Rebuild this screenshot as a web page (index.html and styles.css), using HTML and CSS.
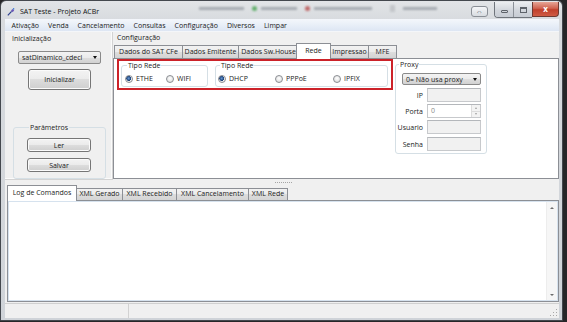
FILE: index.html
```html
<!DOCTYPE html>
<html lang="pt">
<head>
<meta charset="utf-8">
<title>SAT Teste - Projeto ACBr</title>
<link rel="stylesheet" href="styles.css">
</head>
<body>
<div class="window">
  <div class="titlebar">
    <svg class="appicon" viewBox="0 0 8 8" width="8" height="8">
      <path d="M0.8 7.4 L4.6 3.4" stroke="#2b3f8f" stroke-width="1.2" fill="none"/>
      <path d="M4 2.6 L5.6 1 L7.2 2.6 L5.6 4.2 Z" fill="#6b56b8"/>
      <circle cx="6.6" cy="0.9" r="0.8" fill="#3b7bd6"/>
    </svg>
    <span class="title">SAT Teste - Projeto ACBr</span>
    <div class="blurs">
      <span class="bt bw45"></span>
      <span class="dot green"></span>
      <span class="bt bw36"></span>
      <span class="dot red"></span>
      <span class="bt bw58"></span>
      <span class="bicon"></span>
      <span class="bt bw34"></span>
    </div>
    <div class="capbtns">
      <span class="cap-extra">&#8660;</span>
      <div class="cap-group">
        <span class="cap-min"><span class="min-glyph"></span></span>
        <span class="cap-max"><span class="max-glyph"></span></span>
      </div>
      <span class="cap-close">x</span>
    </div>
  </div>

  <div class="client">
    <div class="menubar">
      <span class="menuitem">Ativação</span>
      <span class="menuitem">Venda</span>
      <span class="menuitem">Cancelamento</span>
      <span class="menuitem">Consultas</span>
      <span class="menuitem">Configuração</span>
      <span class="menuitem">Diversos</span>
      <span class="menuitem">Limpar</span>
    </div>

    <div class="main">
      <div class="leftpanel">
        <span class="panel-label">Inicialização</span>
        <div class="combo combo-lib"><span class="combo-text">satDinamico_cdecl</span><span class="arrow"></span></div>
        <button class="btn btn-init">Inicializar</button>
        <fieldset class="group group-param">
          <legend>Parâmetros</legend>
          <button class="btn btn-small btn-ler">Ler</button>
          <button class="btn btn-small btn-salvar">Salvar</button>
        </fieldset>
      </div>

      <div class="config">
        <span class="config-label">Configuração</span>
        <div class="tabs">
          <span class="tab t1">Dados do SAT CFe</span>
          <span class="tab t2">Dados Emitente</span>
          <span class="tab t3">Dados Sw.House</span>
          <span class="tab t4 selected">Rede</span>
          <span class="tab t5">Impressao</span>
          <span class="tab t6">MFE</span>
        </div>
        <div class="tabpage">
          <div class="highlight">
            <fieldset class="group group-tipo1">
              <legend>Tipo Rede</legend>
              <div class="radios">
                <span class="radio-item ri41"><span class="radio checked"></span>ETHE</span>
                <span class="radio-item"><span class="radio"></span>WIFI</span>
              </div>
            </fieldset>
            <fieldset class="group group-tipo2">
              <legend>Tipo Rede</legend>
              <div class="radios">
                <span class="radio-item ri57"><span class="radio checked"></span>DHCP</span>
                <span class="radio-item ri58"><span class="radio"></span>PPPoE</span>
                <span class="radio-item"><span class="radio"></span>IPFIX</span>
              </div>
            </fieldset>
          </div>
          <fieldset class="group group-proxy">
            <legend>Proxy</legend>
            <div class="combo combo-proxy"><span class="combo-text">0= Não usa proxy</span><span class="arrow"></span></div>
            <div class="field-row r-ip"><span class="flabel">IP</span><span class="edit disabled"></span></div>
            <div class="field-row"><span class="flabel">Porta</span><span class="edit spin"><span class="spin-val">0</span><span class="spin-btns"><span class="sb up"></span><span class="sb down"></span></span></span></div>
            <div class="field-row"><span class="flabel">Usuario</span><span class="edit disabled"></span></div>
            <div class="field-row r-senha"><span class="flabel">Senha</span><span class="edit disabled"></span></div>
          </fieldset>
        </div>
      </div>
    </div>

    <div class="splitter"><span class="grip"></span></div>

    <div class="bottom">
      <div class="btabs">
        <span class="btab b1 selected">Log de Comandos</span>
        <span class="btab b2">XML Gerado</span>
        <span class="btab b3">XML Recebido</span>
        <span class="btab b4">XML Cancelamento</span>
        <span class="btab b5">XML Rede</span>
      </div>
      <div class="memo">
        <div class="memo-text"></div>
        <div class="vscroll">
          <span class="sarrow sup"></span>
          <span class="sarrow sdown"></span>
        </div>
      </div>
    </div>

    <div class="statusbar">
      <span class="sp1"></span>
      <span class="sp2"></span>
      <span class="sizegrip"></span>
    </div>
  </div>
</div>
</body>
</html>
```
FILE: styles.css
```css
* { box-sizing: border-box; }
html, body { margin: 0; height: 100%; }
body {
  background: #262628;
  font-family: "Open Sans", "Noto Sans", sans-serif;
  font-size: 7px;
  line-height: 9px;
  color: #1a1a1a;
  overflow: hidden;
}

.window {
  width: 563px;
  height: 321px;
  border: 1px solid #44484e;
  border-radius: 6px 6px 0 0;
  background: linear-gradient(#e2e4e7, #d8dbdf 18px, #cfd3d8);
  display: flex;
  flex-direction: column;
  padding: 0 3px 2px 4px;
}

/* title bar */
.titlebar {
  height: 18px;
  display: flex;
  align-items: center;
  flex-shrink: 0;
}
.appicon { margin-left: 2px; margin-top: 3px; flex-shrink: 0; }
.title { margin-left: 5px; margin-top: 3px; color: #111; white-space: nowrap; }
.blurs {
  flex: 1;
  display: flex;
  align-items: center;
  align-self: flex-start;
  margin: 4px 0 0 100px;
  height: 6px;
  filter: blur(1.1px);
  opacity: 0.7;
}
.bt { height: 3px; background: #8f959d; margin-right: 8px; }
.bw45 { width: 45px; }
.bw36 { width: 36px; }
.bw58 { width: 58px; margin-right: 18px; }
.bw34 { width: 34px; }
.dot { width: 5px; height: 5px; border-radius: 50%; margin-right: 4px; }
.green { background: #2f9a3a; }
.red { background: #b23333; }
.bicon { width: 5px; height: 7px; background: #b9bcc0; margin-right: 8px; }

.capbtns { display: flex; align-self: flex-start; margin-top: 1px; }
.cap-extra {
  width: 17px; height: 11px; margin-top: 4px; margin-right: 6px;
  border: 1px solid #8a8f96; border-radius: 3px;
  background: linear-gradient(#f5f6f8, #d8dce1);
  font-size: 7px; line-height: 9px; text-align: center; color: #4a4e55;
}
.cap-group {
  display: flex;
  border: 1px solid #6f747b;
  border-top: none;
  border-right: none;
  border-radius: 0 0 0 4px;
  overflow: hidden;
}
.cap-min, .cap-max {
  width: 18px; height: 15px;
  background: linear-gradient(#eceef1, #d2d6dc 55%, #c7ccd3);
  display: flex; align-items: center; justify-content: center;
}
.cap-max { width: 19px; border-left: 1px solid #8c9198; }
.min-glyph { width: 7px; height: 3px; border: 1px solid #5e636a; border-radius: 1px; margin-top: 3px; }
.max-glyph { width: 7px; height: 6px; border: 1px solid #5e636a; border-top-width: 2px; }
.cap-close {
  width: 27px; height: 15px;
  border: 1px solid #6f3a32; border-top: none;
  border-radius: 0 0 4px 0;
  background: linear-gradient(#e6a596, #d06350 45%, #c0402c 55%, #cf5b44);
  color: #fff; font-weight: bold; font-size: 8px; line-height: 13px; text-align: center;
}

/* client */
.client {
  flex: 1;
  background: #f0f0f0;
  display: flex;
  flex-direction: column;
  min-height: 0;
}
.menubar {
  height: 13px;
  flex-shrink: 0;
  display: flex;
  align-items: center;
  padding-left: 2px;
  background: linear-gradient(#f4f7fb, #e6edf7 60%, #dde6f3);
  border-bottom: 1px solid #f4f6f9;
}
.menuitem { padding: 0 4.5px; white-space: nowrap; }

.main { height: 149px; flex-shrink: 0; display: flex; }

.leftpanel {
  width: 108px;
  display: flex;
  flex-direction: column;
  align-items: flex-start;
  border-right: 1px solid #d3d3d3;
  border-bottom: 1px solid #d3d3d3;
  box-shadow: inset -1px -1px 0 #fbfbfb;
  height: 148px;
}
.panel-label { margin: 2px 0 0 7px; }

.combo {
  display: flex;
  align-items: center;
  height: 13px;
  border: 1px solid #8a8a8a;
  border-radius: 2px;
  background: linear-gradient(#f3f3f3, #ebebeb 50%, #dedede 50%, #d2d2d2);
  padding-left: 3px;
}
.combo-text { flex: 1; white-space: nowrap; }
.arrow {
  width: 0; height: 0; margin-right: 3px;
  border-left: 2.5px solid transparent;
  border-right: 2.5px solid transparent;
  border-top: 3px solid #111;
}
.combo-lib { margin: 8px 0 0 13px; width: 83px; }

.btn {
  font-family: inherit;
  font-size: 7px;
  line-height: 9px;
  color: #1a1a1a;
  border: 1px solid #767676;
  border-radius: 3px;
  background: linear-gradient(#f3f3f3, #ebebeb 50%, #dddddd 50%, #cfcfcf);
  box-shadow: inset 0 0 0 1px #fbfbfb;
  padding: 0;
  margin: 0;
}
.btn-init { width: 63px; height: 21px; margin: 5px 0 0 23px; }
.btn-small { width: 64px; height: 14px; display: block; }
.btn-ler { margin-top: 6px; }
.btn-salvar { margin-top: 6px; }

.group {
  margin: 0;
  border: 1px solid #d5dfe5;
  border-radius: 3px;
  min-width: 0;
}
.group legend { padding: 0 1px; margin-left: 2px; line-height: 9px; }
.group-param { width: 93px; height: 56px; margin: 33px 0 0 8px; padding: 0 0 0 13px; }

.config { flex: 1; display: flex; flex-direction: column; }
.config-label { margin: 1px 0 0 4px; height: 12px; }
.tabs { height: 13px; display: flex; align-items: flex-end; padding-left: 1px; position: relative; z-index: 1; }
.tab {
  height: 13px;
  border: 1px solid #8c8f95;
  border-bottom: none;
  margin-right: -1px;
  background: linear-gradient(#f2f2f2, #ebebeb 50%, #dddddd 50%, #d4d4d4);
  text-align: center;
  white-space: nowrap;
  line-height: 11px;
}
.tab.selected {
  height: 16px;
  background: #fff;
  margin: 0 -1px -1px -2px;
  padding-top: 1px;
  line-height: 11px;
}
.t1 { width: 69px; }
.t2 { width: 57px; }
.t3 { width: 61px; }
.t4 { width: 35px; }
.t5 { width: 39px; }
.t6 { width: 29px; }

.tabpage {
  height: 121px;
  width: 446px;
  border: 1px solid #8c8f95;
  background: #fff;
  display: flex;
  align-items: flex-start;
}
.highlight {
  margin-left: 3px;
  width: 276px;
  height: 31px;
  border: 2px solid #cc2229;
  display: flex;
  align-items: flex-start;
  padding-left: 2px;
  gap: 7px;
}
.group-tipo1 { width: 87px; height: 26px; padding: 0 0 0 3px; }
.group-tipo2 { width: 173px; height: 26px; padding: 0 0 0 2px; }
.radios { display: flex; margin-top: 4px; }
.radio-item { display: inline-flex; align-items: center; white-space: nowrap; }
.ri41 { width: 41px; }
.ri57 { width: 57px; }
.ri58 { width: 58px; }
.radio {
  width: 8px; height: 8px;
  border-radius: 50%;
  border: 1px solid #8b8e93;
  background: radial-gradient(circle at 50% 40%, #ffffff, #e2e2e2 70%, #cfcfcf);
  margin-right: 3px;
  flex-shrink: 0;
}
.radio.checked {
  background: radial-gradient(circle at 45% 40%, #6d9ad0 0, #2a5794 1.7px, #1c3f73 2.3px, #f4f4f4 2.6px, #dcdcdc);
}

.group-proxy { width: 92px; height: 94px; margin: 1px 0 0 2px; padding: 0 0 0 1px; }
.combo-proxy { width: 79px; height: 12px; margin: 4px 0 0 5px; }
.field-row { display: flex; align-items: center; height: 14px; margin-top: 2px; }
.field-row.r-ip { margin-top: 3px; }
.field-row.r-senha { margin-top: 3px; }
.flabel { width: 26px; text-align: right; white-space: nowrap; }
.edit {
  width: 54px; height: 14px; margin-left: 4px;
  border: 1px solid #c7c9cc;
  border-top-color: #b4b7bb;
}
.edit.disabled { background: #f1f1f1; }
.edit.spin { background: #fff; display: flex; }
.spin-val { flex: 1; color: #8a8a8a; padding-left: 3px; line-height: 11px; }
.spin-btns { width: 9px; display: flex; flex-direction: column; border-left: 1px solid #dcdcdc; }
.sb { flex: 1; background: #f3f3f3; display: flex; align-items: center; justify-content: center; }
.sb.up { border-bottom: 1px solid #dcdcdc; }
.sb.up::after { content: ""; border-left: 1.5px solid transparent; border-right: 1.5px solid transparent; border-bottom: 2px solid #a0a0a0; }
.sb.down::after { content: ""; border-left: 1.5px solid transparent; border-right: 1.5px solid transparent; border-top: 2px solid #a0a0a0; }

/* splitter */
.splitter { height: 4px; flex-shrink: 0; display: flex; justify-content: center; padding-left: 2px; }
.grip {
  width: 17px; height: 1px; margin-top: 1px;
  background: repeating-linear-gradient(90deg, #a5a5a5 0 1px, transparent 1px 2px);
}

/* bottom tab control */
.bottom { height: 117px; flex-shrink: 0; display: flex; flex-direction: column; padding-left: 2px; }
.btabs { height: 15px; display: flex; align-items: flex-end; position: relative; z-index: 1; }
.btab {
  height: 12px;
  border: 1px solid #8c8f95;
  border-bottom: none;
  margin-right: -1px;
  background: linear-gradient(#f2f2f2, #ebebeb 50%, #dddddd 50%, #d4d4d4);
  text-align: center;
  white-space: nowrap;
  line-height: 10px;
}
.btab.selected { height: 16px; background: #fff; margin-bottom: -1px; line-height: 13px; }
.b1 { width: 70px; }
.b2 { width: 47px; }
.b3 { width: 55px; }
.b4 { width: 73px; }
.b5 { width: 40px; }

.memo {
  flex: 1;
  border: 1px solid #8c8f95;
  background: #fff;
  display: flex;
  padding: 1px;
  box-shadow: inset 0 0 0 1px #d6e2ee;
}
.memo-text { flex: 1; }
.vscroll {
  width: 11px;
  background: #f6f6f6;
  border-left: 1px solid #ededed;
  display: flex;
  flex-direction: column;
  justify-content: space-between;
  align-items: center;
  padding: 5px 0 4px;
}
.sarrow { width: 0; height: 0; border-left: 2px solid transparent; border-right: 2px solid transparent; }
.sup { border-bottom: 2px solid #6d6d6d; }
.sdown { border-top: 2px solid #6d6d6d; }

/* status bar */
.statusbar {
  height: 15px;
  flex-shrink: 0;
  margin-top: 1px;
  display: flex;
  border-top: 1px solid #d0d0d0;
}
.sp1 { width: 124px; border-right: 1px solid #d2d2d2; }
.sp2 { flex: 1; }
.sizegrip {
  width: 8px; height: 8px; align-self: flex-end; margin: 0 2px 2px 0;
  background: radial-gradient(circle, #a8a8a8 0.6px, transparent 0.8px) 0 0 / 3px 3px;
  clip-path: polygon(100% 0, 100% 100%, 0 100%);
}
```
